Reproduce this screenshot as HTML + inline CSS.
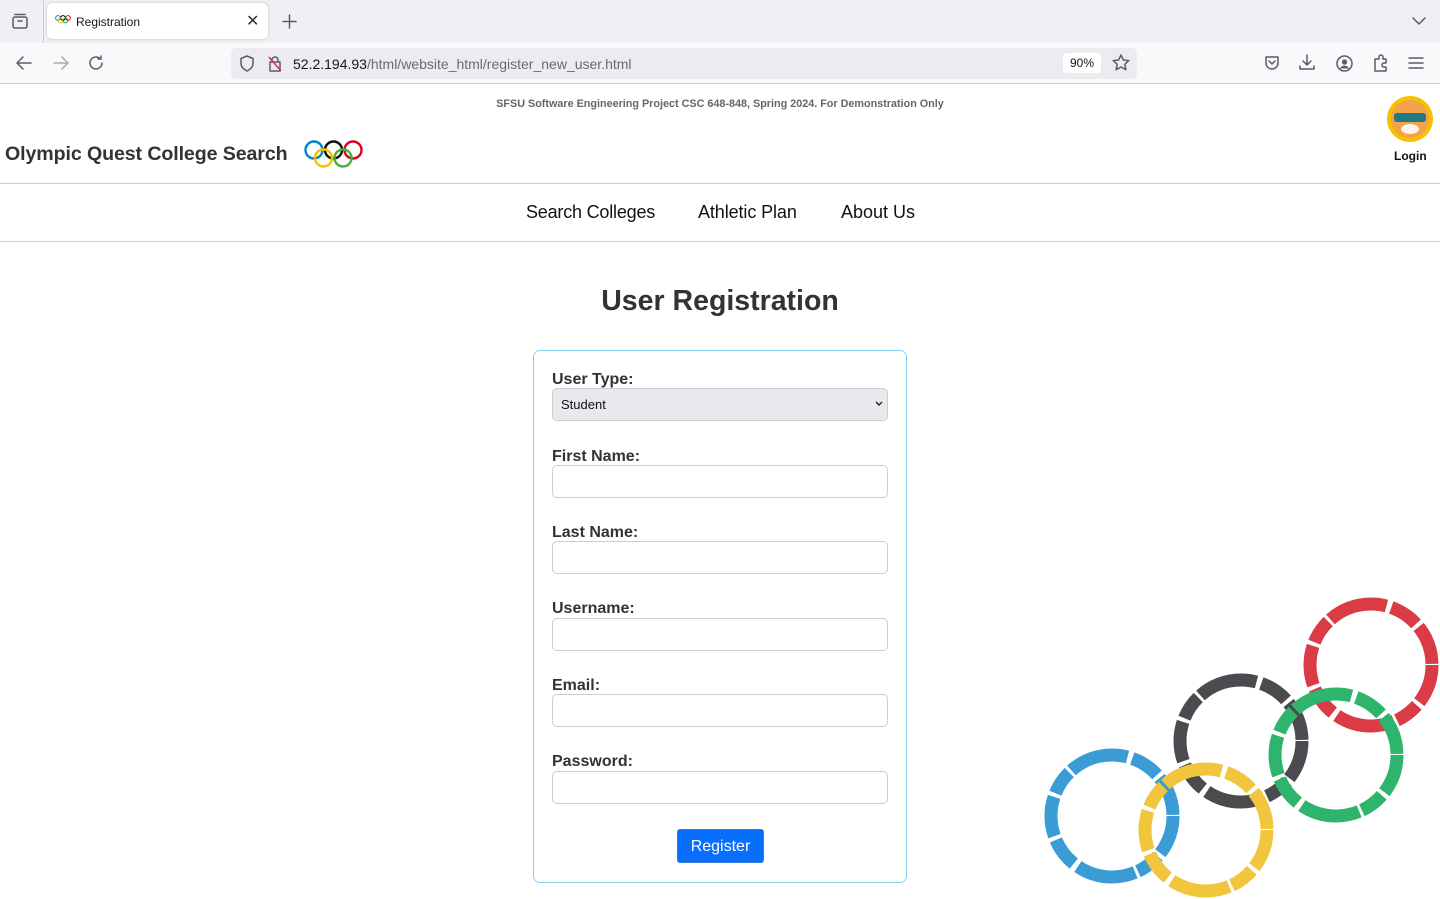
<!DOCTYPE html>
<html><head><meta charset="utf-8"><style>
*{box-sizing:border-box;margin:0;padding:0}
body{width:1440px;height:899px;overflow:hidden;background:#fff;font-family:"Liberation Sans",Arial,sans-serif;position:relative}
.a{position:absolute}
.tabbar{left:0;top:0;width:1440px;height:43px;background:#f0f0f4}
.navbar{left:0;top:43px;width:1440px;height:41px;background:#f9f9fb;border-bottom:1px solid #ccc}
.tab{left:47px;top:3px;width:221px;height:36px;background:#fff;border-radius:5px;box-shadow:0 0 2px rgba(0,0,0,.25);font-size:12px;color:#15141a}
.url{left:231px;top:48px;width:906px;height:31px;background:#ececf0;border-radius:5px}
.ico{stroke:#5b5b66;fill:none;stroke-width:1.5;stroke-linecap:round;stroke-linejoin:round}
.lbl{left:552px;font-weight:bold;font-size:16px;color:#333}
.inp{left:552px;width:336px;height:33px;border:1px solid #ccc;border-radius:5px;background:#fff}
</style></head><body>
<div class="a tabbar"></div>
<svg class="a" style="left:11px;top:13px" width="18" height="17" viewBox="0 0 18 17"><rect class="ico" x="2" y="4" width="14" height="11" rx="2"/><path class="ico" d="M4 1.5h10M7 8h4"/></svg>
<div class="a" style="left:43px;top:0;width:1px;height:43px;background:#ccc"></div>
<div class="a tab">
<svg class="a" style="left:8px;top:12px" width="16" height="9" viewBox="0 0 16 9"><g fill="none" stroke-width="1"><circle cx="3" cy="3" r="2.4" stroke="#0085c7"/><circle cx="8" cy="3" r="2.4" stroke="#000"/><circle cx="13" cy="3" r="2.4" stroke="#df0024"/><circle cx="5.5" cy="5.5" r="2.4" stroke="#f4c300"/><circle cx="10.5" cy="5.5" r="2.4" stroke="#009f3d"/></g></svg>
<span class="a" style="left:29px;top:12px">Registration</span>
<span class="a" style="left:199px;top:8px;font-size:16px;color:#333">✕</span>
</div>
<svg class="a" style="left:282px;top:14px" width="15" height="15"><path class="ico" d="M7.5 1v13M1 7.5h13"/></svg>
<svg class="a" style="left:1411px;top:14px" width="16" height="14"><path class="ico" d="M2 4l6 6 6-6"/></svg>
<div class="a navbar"></div>
<svg class="a" style="left:14px;top:54px" width="20" height="18"><path class="ico" d="M17 9H3M9 3L3 9l6 6"/></svg>
<svg class="a" style="left:51px;top:54px" width="20" height="18"><path class="ico" style="stroke:#aaa" d="M3 9h14M11 3l6 6-6 6"/></svg>
<svg class="a" style="left:87px;top:54px" width="20" height="18"><path class="ico" d="M15 9a6 6 0 1 1-2-4.5M14 2v3h-3"/></svg>
<div class="a url"></div>
<svg class="a" style="left:238px;top:54px" width="18" height="19"><path class="ico" d="M9 2l6 2.5v5c0 4-3 6-6 7.5-3-1.5-6-3.5-6-7.5v-5z"/></svg>
<svg class="a" style="left:266px;top:54px" width="18" height="19"><path class="ico" d="M6 8V6a3 3 0 0 1 6 0v2M4 8h10v9H4z"/><path d="M3 3l12 14" stroke="#e22850" stroke-width="1.5"/></svg>
<div class="a" style="left:293px;top:56px;font-size:14px;color:#15141a">52.2.194.93<span style="color:#6a6a70">/html/website_html/register_new_user.html</span></div>
<div class="a" style="left:1063px;top:53px;width:38px;height:20px;background:#fff;border-radius:4px;font-size:12px;text-align:center;line-height:20px;color:#15141a">90%</div>
<svg class="a" style="left:1111px;top:53px" width="20" height="20"><path class="ico" d="M10 2l2.4 5 5.4.6-4 3.7 1.1 5.4L10 14l-4.9 2.7 1.1-5.4-4-3.7 5.4-.6z"/></svg>
<svg class="a" style="left:1263px;top:54px" width="18" height="18"><path class="ico" d="M3 3h12v6a6 6 0 0 1-12 0z"/><path class="ico" d="M6 7l3 3 3-3"/></svg>
<svg class="a" style="left:1298px;top:53px" width="18" height="19"><path class="ico" d="M9 2v10M5 8l4 4 4-4M2 13v3h14v-3"/></svg>
<svg class="a" style="left:1335px;top:54px" width="19" height="19"><circle class="ico" cx="9.5" cy="9.5" r="7.5"/><circle cx="9.5" cy="8" r="2.6" fill="#5b5b66"/><path d="M5 14.5a5 5 0 0 1 9 0" fill="#5b5b66"/></svg>
<svg class="a" style="left:1372px;top:53px" width="18" height="20"><path class="ico" d="M3 6h4V4a2 2 0 0 1 4 0v2h3v4h-2a2 2 0 0 0 0 4h2v4H3z"/></svg>
<svg class="a" style="left:1408px;top:56px" width="16" height="14"><path class="ico" d="M1 2h14M1 7h14M1 12h14"/></svg>

<div class="a" style="left:0;top:98px;width:1440px;text-align:center;font-size:10.8px;font-weight:bold;color:#666">SFSU Software Engineering Project CSC 648-848, Spring 2024. For Demonstration Only</div>
<div class="a" style="left:5px;top:143px;font-size:19.6px;font-weight:bold;color:#333;letter-spacing:-0.1px">Olympic Quest College Search</div>
<svg class="a" style="left:303px;top:139px" width="62" height="32" viewBox="0 0 62 32"><g fill="none" stroke-width="2.4"><circle cx="11" cy="11" r="8.5" stroke="#0085c7"/><circle cx="30.5" cy="11" r="8.5" stroke="#111"/><circle cx="50" cy="11" r="8.5" stroke="#df0024"/><circle cx="20.5" cy="19" r="8.5" stroke="#f4c300"/><circle cx="40" cy="19" r="8.5" stroke="#46b13e"/></g></svg>
<div class="a" style="left:1387px;top:96px;width:46px;height:46px;border-radius:50%;background:#f5c100"></div>
<div class="a" style="left:1391px;top:100px;width:38px;height:38px;border-radius:50%;background:#f2a24a"></div>
<div class="a" style="left:1394px;top:113px;width:32px;height:9px;border-radius:3px;background:#1f7a83"></div>
<div class="a" style="left:1401px;top:124px;width:18px;height:10px;border-radius:50%;background:#fff3e6"></div>
<div class="a" style="left:1394px;top:149px;font-size:12px;font-weight:bold;color:#111">Login</div>
<div class="a" style="left:0;top:183px;width:1440px;height:1px;background:#ccc"></div>
<div class="a" style="left:526px;top:202px;font-size:18px;color:#111;letter-spacing:-0.2px">Search Colleges</div>
<div class="a" style="left:698px;top:202px;font-size:18px;color:#111;letter-spacing:-0.1px">Athletic Plan</div>
<div class="a" style="left:841px;top:202px;font-size:18px;color:#111">About Us</div>
<div class="a" style="left:0;top:241px;width:1440px;height:1px;background:#ccc"></div>

<div class="a" style="left:0;top:285px;width:1440px;text-align:center;font-size:28.5px;font-weight:bold;color:#333">User Registration</div>
<div class="a" style="left:533px;top:350px;width:374px;height:533px;border:1px solid #87cfea;border-radius:7px"></div>
<div class="a lbl" style="top:371px">User Type:</div>
<div class="a inp" style="top:388px;background:#e8e8ed;font-size:13px;line-height:31px;padding-left:8px;color:#111">Student<svg class="a" style="right:4px;top:12px" width="8" height="6"><path d="M1 1l3 3 3-3" fill="none" stroke="#222" stroke-width="1.4"/></svg></div>
<div class="a lbl" style="top:448px">First Name:</div><div class="a inp" style="top:465px"></div>
<div class="a lbl" style="top:524px">Last Name:</div><div class="a inp" style="top:541px"></div>
<div class="a lbl" style="top:600px">Username:</div><div class="a inp" style="top:618px"></div>
<div class="a lbl" style="top:677px">Email:</div><div class="a inp" style="top:694px"></div>
<div class="a lbl" style="top:753px">Password:</div><div class="a inp" style="top:771px"></div>
<div class="a" style="left:677px;top:829px;width:87px;height:34px;background:#0a6efd;border:1px solid #3b7dd8;border-radius:3px;color:#fff;font-size:16px;text-align:center;line-height:34px">Register</div>

<svg class="a" style="left:1040px;top:590px" width="400" height="309"><g fill="none" stroke-width="13" stroke-dasharray="40 4 25 3 60 5 30 4"><circle cx="72" cy="226" r="61" stroke="#3b9bd4"/><circle cx="201" cy="151" r="61" stroke="#4a4a4f"/><circle cx="331" cy="75" r="61" stroke="#d93c44"/><circle cx="166" cy="240" r="61" stroke="#f1c53c"/><circle cx="296" cy="165" r="61" stroke="#2fb46e"/></g></svg>
</body></html>
